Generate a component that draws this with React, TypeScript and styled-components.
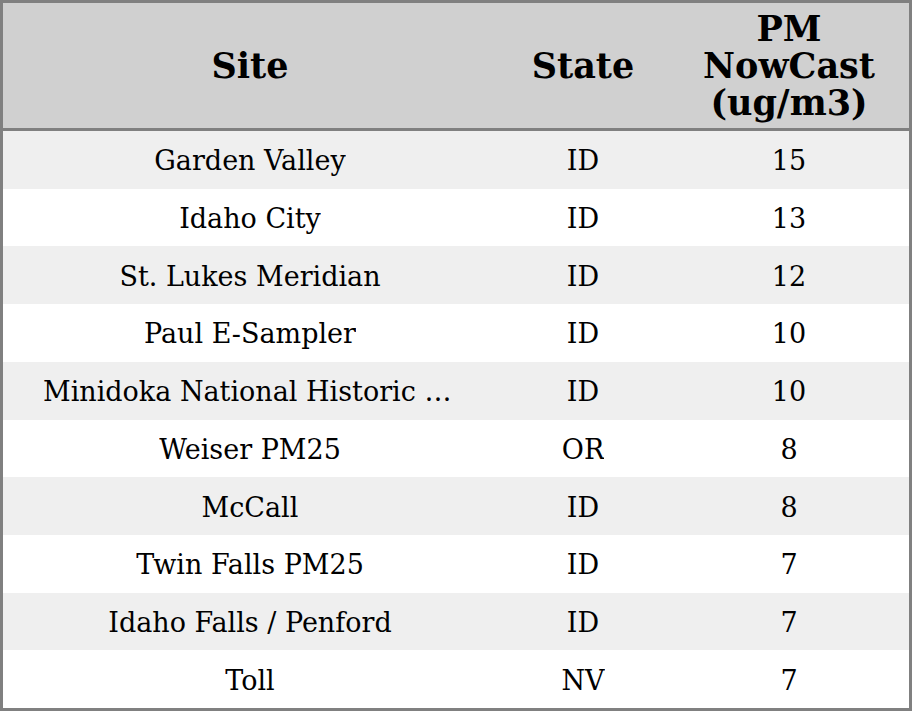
import React from 'react';
import styled, { createGlobalStyle } from 'styled-components';

const GlobalStyle = createGlobalStyle`
  html, body {
    margin: 0;
    padding: 0;
    background: #ffffff;
  }
  * {
    box-sizing: border-box;
  }
`;

const Table = styled.div`
  display: flex;
  flex-direction: column;
  width: 912px;
  height: 711px;
  border: 3px solid #808080;
  font-family: 'DejaVu Serif', serif;
  color: #000000;
`;

const HeaderRow = styled.div`
  display: grid;
  grid-template-columns: 494px 172px 240px;
  height: 128px;
  flex: none;
  background: #d0d0d0;
  border-bottom: 3px solid #808080;
`;

const HeaderCell = styled.div`
  display: flex;
  align-items: center;
  justify-content: center;
  text-align: center;
  font-size: 35px;
  font-weight: bold;
  line-height: 37px;
`;

const Row = styled.div<{ $striped: boolean }>`
  display: grid;
  grid-template-columns: 494px 172px 240px;
  flex: 1;
  min-height: 0;
  background: ${p => (p.$striped ? '#efefef' : '#ffffff')};
`;

const Cell = styled.div`
  display: flex;
  align-items: center;
  justify-content: center;
  min-width: 0;
  padding: 2px 40px 0;
  font-size: 27px;
`;

const CellText = styled.span`
  display: block;
  max-width: 100%;
  white-space: nowrap;
  overflow: hidden;
  text-overflow: ellipsis;
`;

interface SiteReading {
  site: string;
  state: string;
  nowcast: number;
}

const readings: SiteReading[] = [
  { site: 'Garden Valley', state: 'ID', nowcast: 15 },
  { site: 'Idaho City', state: 'ID', nowcast: 13 },
  { site: 'St. Lukes Meridian', state: 'ID', nowcast: 12 },
  { site: 'Paul E-Sampler', state: 'ID', nowcast: 10 },
  { site: 'Minidoka National Historic Site', state: 'ID', nowcast: 10 },
  { site: 'Weiser PM25', state: 'OR', nowcast: 8 },
  { site: 'McCall', state: 'ID', nowcast: 8 },
  { site: 'Twin Falls PM25', state: 'ID', nowcast: 7 },
  { site: 'Idaho Falls / Penford', state: 'ID', nowcast: 7 },
  { site: 'Toll', state: 'NV', nowcast: 7 },
];

const App: React.FC = () => (
  <>
    <GlobalStyle />
    <Table>
      <HeaderRow>
        <HeaderCell>Site</HeaderCell>
        <HeaderCell>State</HeaderCell>
        <HeaderCell>
          PM
          <br />
          NowCast
          <br />
          (ug/m3)
        </HeaderCell>
      </HeaderRow>
      {readings.map((r, i) => (
        <Row key={r.site} $striped={i % 2 === 0}>
          <Cell>
            <CellText>{r.site}</CellText>
          </Cell>
          <Cell>
            <CellText>{r.state}</CellText>
          </Cell>
          <Cell>
            <CellText>{r.nowcast}</CellText>
          </Cell>
        </Row>
      ))}
    </Table>
  </>
);

export default App;
